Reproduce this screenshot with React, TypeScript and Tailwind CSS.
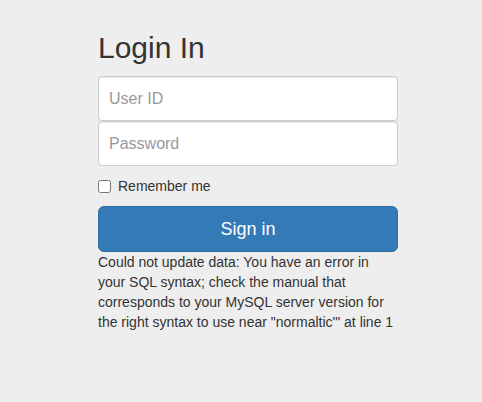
export default function App() {
  return (
    <div className="min-h-[402px] bg-[#eeeeee] text-[#333333] font-['Liberation_Sans',Arial,sans-serif] text-[14px] leading-[20px]">
      <form className="ml-[98px] w-[300px] pt-[31px]" onSubmit={(e) => e.preventDefault()}>
        <h2 className="text-[30px] leading-[33px] font-normal mb-[12px]">Login In</h2>
        <input
          type="text"
          placeholder="User ID"
          className="block w-full h-[45px] px-[10px] text-[16px] bg-white border border-[#cccccc] rounded-[4px] placeholder:text-[#999999] shadow-[inset_0_1px_1px_rgba(0,0,0,0.075)] outline-none"
        />
        <input
          type="password"
          placeholder="Password"
          className="block w-full h-[45px] px-[10px] text-[16px] bg-white border border-[#cccccc] rounded-[4px] placeholder:text-[#999999] shadow-[inset_0_1px_1px_rgba(0,0,0,0.075)] outline-none"
        />
        <label className="flex items-center gap-[7px] mt-[10px] mb-[10px] h-[20px]">
          <input type="checkbox" className="w-[13px] h-[13px] m-0" />
          <span>Remember me</span>
        </label>
        <button
          type="submit"
          className="block w-full h-[46px] text-[18px] text-white bg-[#337ab7] border border-[#2e6da4] rounded-[6px]"
        >
          Sign in
        </button>
        <p className="mt-0">
          Could not update data: You have an error in your SQL syntax; check the manual that corresponds to your MySQL server version for the right syntax to use near "normaltic'" at line 1
        </p>
      </form>
    </div>
  );
}
